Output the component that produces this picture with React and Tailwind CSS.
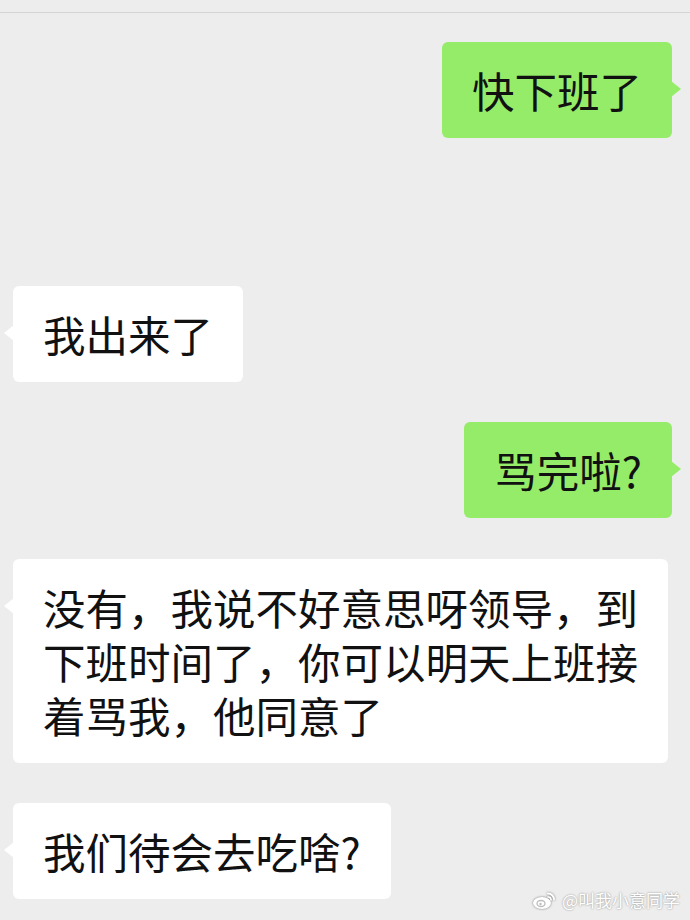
import React from "react";

function Bubble({ side, children, className = "" }) {
  const right = side === "right";
  return (
    <div
      className={
        "relative rounded-[6px] px-[30px] py-[21px] text-[42.5px] leading-[54px] text-[#111111] " +
        (right ? "self-end mr-[18px] bg-[#95ec69] " : "self-start ml-[13px] bg-white ") +
        className
      }
    >
      {right ? (
        <div className="absolute right-[-9px] top-[39px] h-0 w-0 border-y-[8px] border-y-transparent border-l-[10px] border-l-[#95ec69]" />
      ) : (
        <div className="absolute left-[-9px] top-[39px] h-0 w-0 border-y-[8px] border-y-transparent border-r-[10px] border-r-white" />
      )}
      {children}
    </div>
  );
}

export default function App() {
  return (
    <div className="relative h-[920px] w-[690px] overflow-hidden bg-[#ededed] font-['Noto_Sans_CJK_SC','Noto_Sans',sans-serif]">
      <div className="h-[12px]" />
      <div className="h-[1px] bg-[#d4d4d4]" />
      <div className="flex flex-col pt-[29px]">
        <Bubble side="right">快下班了</Bubble>
        <Bubble side="left" className="mt-[148px]">我出来了</Bubble>
        <Bubble side="right" className="mt-[40px]">骂完啦?</Bubble>
        <Bubble side="left" className="mt-[41px] mr-[20px]">
          <div className="whitespace-nowrap">没有，我说不好意思呀领导，到</div>
          <div className="whitespace-nowrap">下班时间了，你可以明天上班接</div>
          <div className="whitespace-nowrap">着骂我，他同意了</div>
        </Bubble>
        <Bubble side="left" className="mt-[40px]">我们待会去吃啥?</Bubble>
      </div>
      <div className="absolute bottom-[10px] right-[10px] flex items-center gap-[4px] text-[17px] leading-[20px] text-white [text-shadow:0_0_2px_rgba(0,0,0,0.45)]">
        <svg width="26" height="20" viewBox="0 0 26 20" className="[filter:drop-shadow(0_0_1px_rgba(0,0,0,0.5))]">
          <ellipse cx="10" cy="13" rx="9" ry="6" fill="white" />
          <ellipse cx="9" cy="13.5" rx="4" ry="3" fill="none" stroke="#bdbdbd" strokeWidth="1.3" />
          <circle cx="8.5" cy="14" r="1.2" fill="#bdbdbd" />
          <path d="M16 3.5 A6 6 0 0 1 22 9.5" fill="none" stroke="white" strokeWidth="1.8" strokeLinecap="round" />
          <path d="M16 7 A3 3 0 0 1 19 10" fill="none" stroke="white" strokeWidth="1.6" strokeLinecap="round" />
        </svg>
        <span>@叫我小意同学</span>
      </div>
    </div>
  );
}
